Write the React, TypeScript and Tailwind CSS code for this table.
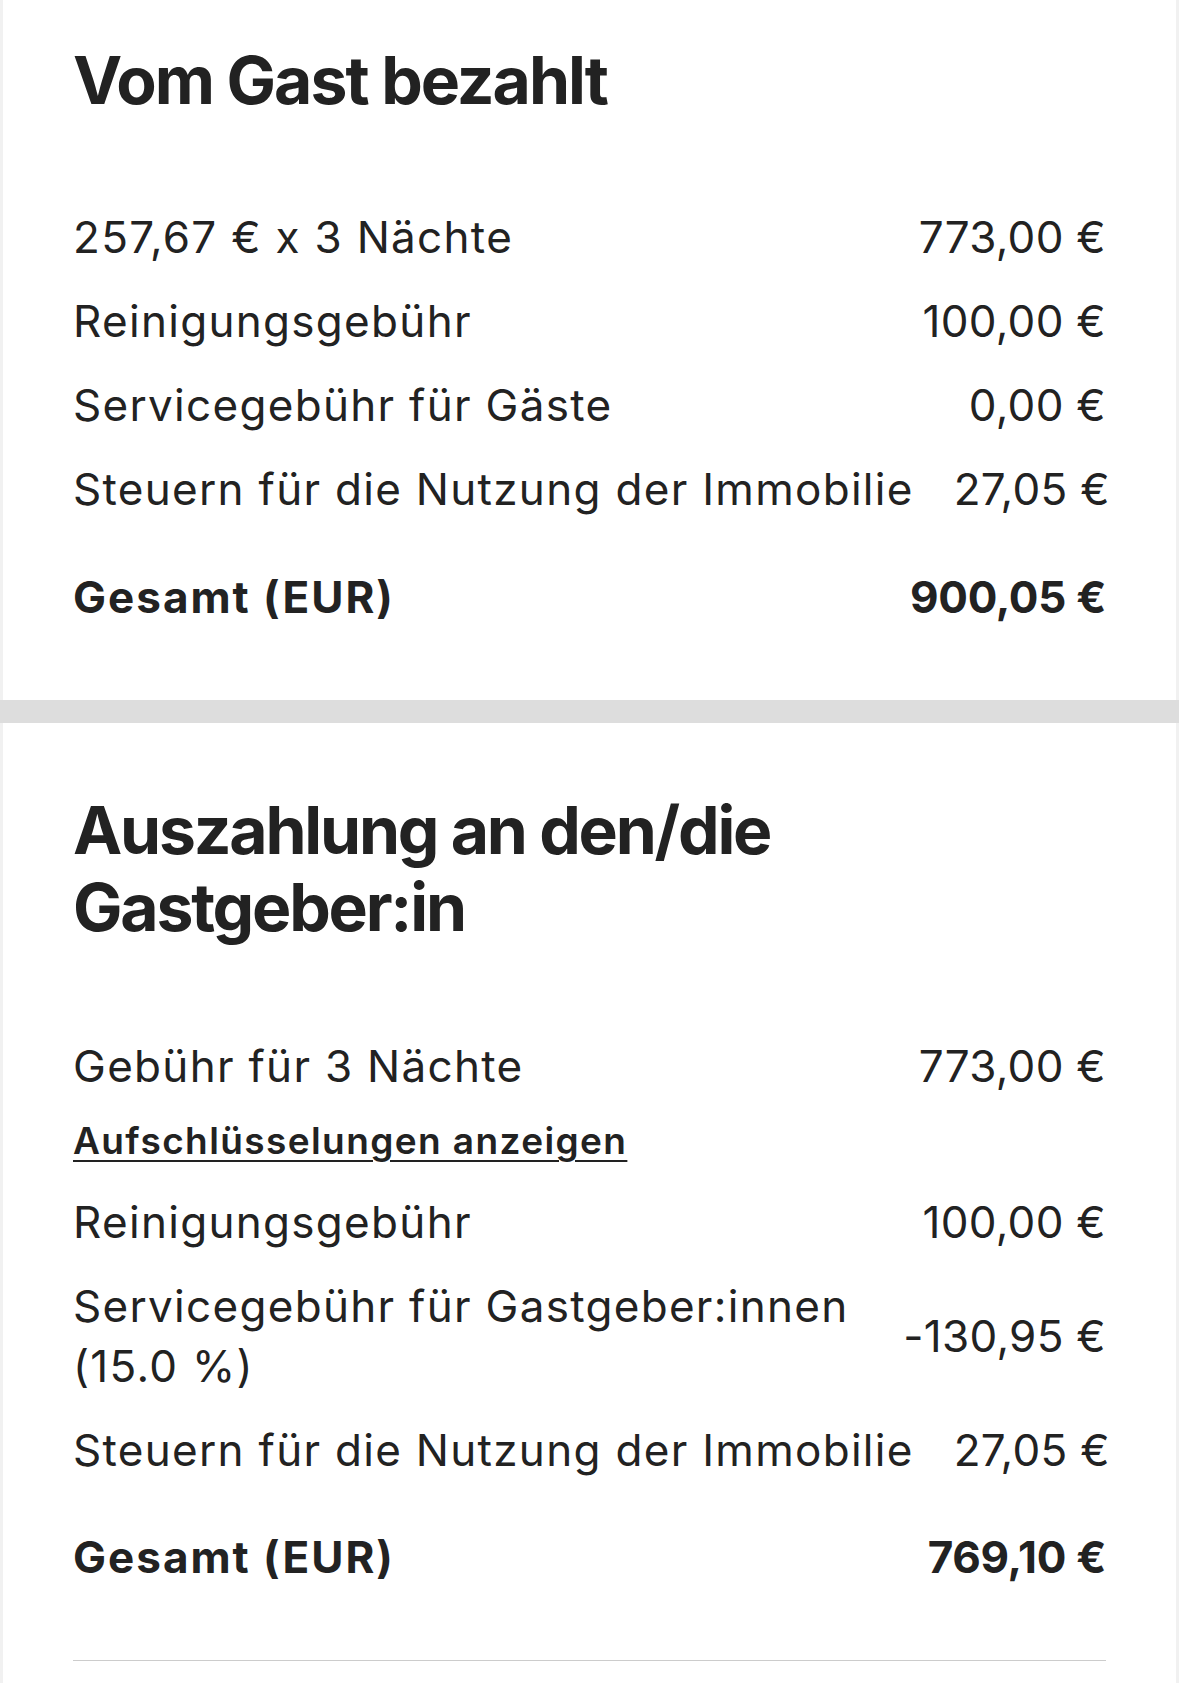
import React from "react";

const font = { fontFamily: "Inter, 'Noto Sans', sans-serif" };

function Row({ label, value, bold = false }: { label: React.ReactNode; value: string; bold?: boolean }) {
  return (
    <div className={`flex items-center justify-between ${bold ? "font-bold" : "font-normal"}`}>
      <div className={`whitespace-nowrap ${bold ? "tracking-[2px]" : "tracking-[1.3px]"}`}>{label}</div>
      <div className={`ml-10 shrink-0 whitespace-nowrap text-right ${bold ? "tracking-[-0.3px]" : "tracking-[0.3px]"}`}>
        {value}
      </div>
    </div>
  );
}

export default function App() {
  return (
    <div className="w-[1179px] min-h-[1683px] bg-white text-[#222222]" style={font}>
      <div className="border-x-[3px] border-[#f1f1f1] min-h-[1683px]">
        {/* Section 1 */}
        <section className="px-[70px] pt-[42px] pb-[73px]">
          <h1 className="text-[66px] leading-[77px] font-bold tracking-[-2px]">Vom Gast bezahlt</h1>
          <div className="mt-[88px] flex flex-col gap-[24px] text-[44px] leading-[60px]">
            <Row label="257,67 € x 3 Nächte" value="773,00 €" />
            <Row label="Reinigungsgebühr" value="100,00 €" />
            <Row label="Servicegebühr für Gäste" value="0,00 €" />
            <Row label="Steuern für die Nutzung der Immobilie" value="27,05 €" />
          </div>
          <div className="mt-[48px] text-[44px] leading-[60px]">
            <Row label="Gesamt (EUR)" value="900,05 €" bold />
          </div>
        </section>

        <div className="h-[23px] bg-[#dddddd] -mx-[3px]" />

        {/* Section 2 */}
        <section className="px-[70px] pt-[69px]">
          <h2 className="text-[66px] leading-[77px] font-bold tracking-[-2.2px]">
            Auszahlung an den/die
            <br />
            Gastgeber:in
          </h2>
          <div className="mt-[90px] text-[44px] leading-[60px]">
            <Row label="Gebühr für 3 Nächte" value="773,00 €" />
            <div className="mt-[21px] text-[37px] leading-[48px] font-semibold tracking-[1.4px] underline underline-offset-[6px] decoration-[2px]">
              Aufschlüsselungen anzeigen
            </div>
            <div className="mt-[27px] flex flex-col gap-[24px]">
              <Row label="Reinigungsgebühr" value="100,00 €" />
              <Row
                label={
                  <>
                    Servicegebühr für Gastgeber:innen
                    <br />
                    (15.0 %)
                  </>
                }
                value="-130,95 €"
              />
              <Row label="Steuern für die Nutzung der Immobilie" value="27,05 €" />
            </div>
            <div className="mt-[47px]">
              <Row label="Gesamt (EUR)" value="769,10 €" bold />
            </div>
          </div>
          <div className="mt-[73px] h-px bg-[#cccccc]" />
        </section>
      </div>
    </div>
  );
}
